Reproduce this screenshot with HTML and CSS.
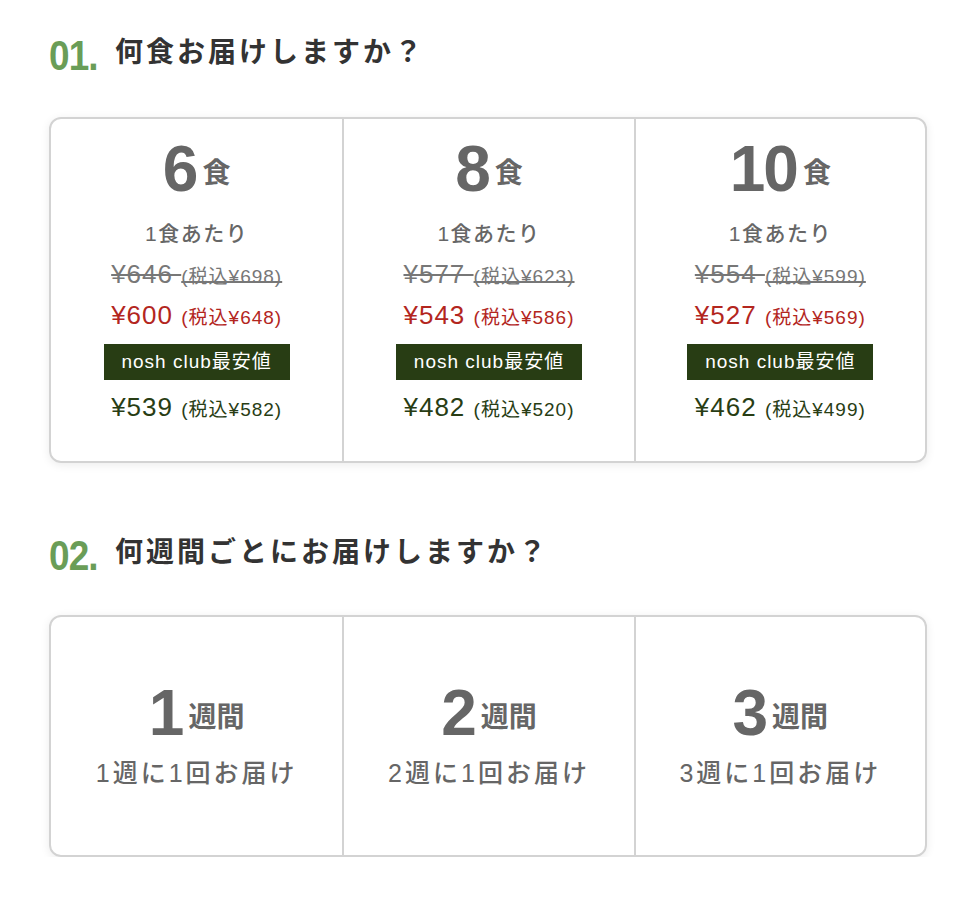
FILE: index.html
```html
<!DOCTYPE html>
<html lang="ja">
<head>
    <meta charset="UTF-8">
    <meta name="viewport" content="width=device-width, initial-scale=1.0">
    <title>お届けプラン</title>
    <link rel="stylesheet" href="styles.css">
</head>
<body>
    <div class="plan">
        <h2 class="step"><span class="step-num"><span>01.</span></span><span class="step-title">何食お届けしますか？</span></h2>
        <ul class="options options-meals">
            <li class="option">
                <p class="count"><span class="count-num">6</span><span class="count-unit">食</span></p>
                <p class="per">1食あたり</p>
                <p class="price price-old">¥646 <small>(税込¥698)</small></p>
                <p class="price price-sale">¥600 <small>(税込¥648)</small></p>
                <p class="badge">nosh club最安値</p>
                <p class="price price-club">¥539 <small>(税込¥582)</small></p>
            </li>
            <li class="option">
                <p class="count"><span class="count-num">8</span><span class="count-unit">食</span></p>
                <p class="per">1食あたり</p>
                <p class="price price-old">¥577 <small>(税込¥623)</small></p>
                <p class="price price-sale">¥543 <small>(税込¥586)</small></p>
                <p class="badge">nosh club最安値</p>
                <p class="price price-club">¥482 <small>(税込¥520)</small></p>
            </li>
            <li class="option">
                <p class="count"><span class="count-num">10</span><span class="count-unit">食</span></p>
                <p class="per">1食あたり</p>
                <p class="price price-old">¥554 <small>(税込¥599)</small></p>
                <p class="price price-sale">¥527 <small>(税込¥569)</small></p>
                <p class="badge">nosh club最安値</p>
                <p class="price price-club">¥462 <small>(税込¥499)</small></p>
            </li>
        </ul>

        <h2 class="step step-second"><span class="step-num"><span>02.</span></span><span class="step-title">何週間ごとにお届けしますか？</span></h2>
        <ul class="options options-weeks">
            <li class="option">
                <p class="count"><span class="count-num">1</span><span class="count-unit">週間</span></p>
                <p class="every">1週に1回お届け</p>
            </li>
            <li class="option">
                <p class="count"><span class="count-num">2</span><span class="count-unit">週間</span></p>
                <p class="every">2週に1回お届け</p>
            </li>
            <li class="option">
                <p class="count"><span class="count-num">3</span><span class="count-unit">週間</span></p>
                <p class="every">3週に1回お届け</p>
            </li>
        </ul>
    </div>
</body>
</html>
```

FILE: styles.css
```css
body { margin: 0; background: #ffffff; font-family: "Liberation Sans", "Noto Sans CJK JP", sans-serif; color: #666666; }
p { margin: 0; }
.plan { width: 878px; padding: 34px 0 0 49px; }

.step { display: flex; align-items: flex-start; margin: 0; height: 44px; }
.step-num { width: 66px; flex: none; color: #6a9d57; font-size: 42px; font-weight: bold; line-height: 44px; height: 44px; }
.step-num span { display: inline-block; transform: scaleX(0.88); transform-origin: left; letter-spacing: -1px; }
.step-title { color: #333333; font-size: 28px; font-weight: bold; letter-spacing: 3px; line-height: 38px; height: 38px; }
.step-second { margin-top: 71px; }

.options { list-style: none; margin: 39px 0 0; padding: 0; display: grid; grid-template-columns: 1fr 1fr 1fr; border: 2px solid #d3d3d3; border-radius: 12px; box-shadow: 0 2px 10px rgba(0, 0, 0, 0.08); overflow: hidden; box-sizing: border-box; }
.options-weeks { margin-top: 37px; height: 242px; }
.options-meals { height: 346px; }
.option { display: flex; flex-direction: column; align-items: center; }
.option + .option { border-left: 2px solid #d3d3d3; }
.options-meals .option { padding-top: 15px; }
.options-weeks .option { padding-top: 61px; }

.count { line-height: 70px; height: 70px; white-space: nowrap; }
.count-num { font-size: 64px; font-weight: bold; letter-spacing: -2px; color: #666666; }
.count-unit { font-size: 28px; font-weight: bold; margin-left: 6px; vertical-align: 8px; color: #666666; }

.per { margin-top: 15px; height: 30px; font-size: 21px; font-weight: 500; letter-spacing: 1.5px; line-height: 30px; }
.price { height: 30px; font-size: 26px; letter-spacing: 1px; line-height: 30px; white-space: nowrap; }
.price small { font-size: 19px; letter-spacing: 1px; }
.price-old { margin-top: 10px; color: #777777; text-decoration: line-through; text-decoration-thickness: 2px; }
.price-sale { margin-top: 11px; color: #b3261e; }
.price-club { margin-top: 12px; color: #283d14; }
.badge { margin-top: 14px; width: 186px; height: 36px; background: #283d14; color: #ffffff; font-size: 19px; letter-spacing: 1px; line-height: 36px; text-align: center; white-space: nowrap; }

.every { margin-top: 10px; height: 30px; font-size: 25px; font-weight: 500; letter-spacing: 3px; line-height: 30px; }
```
